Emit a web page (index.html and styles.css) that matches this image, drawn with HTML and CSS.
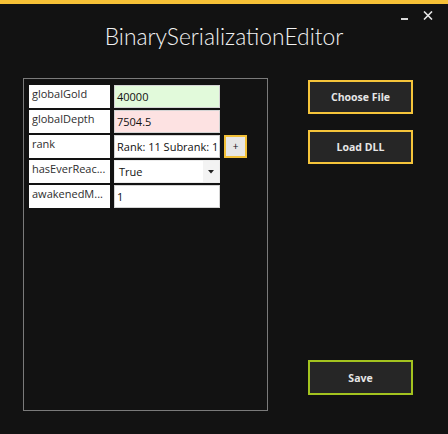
FILE: index.html
```html
<!DOCTYPE html>
<html>
<head>
<meta charset="utf-8">
<link rel="stylesheet" href="styles.css">
</head>
<body>
<div class="window">
  <div class="accent"></div>
  <div class="controls">
    <span class="min"></span>
    <svg class="close" width="10" height="9" viewBox="0 0 10 9"><path d="M1 0.5 L9 8.5 M9 0.5 L1 8.5" stroke="#e6e6e6" stroke-width="1.6" fill="none"/></svg>
  </div>
  <h1 class="title">BinarySerializationEditor</h1>
  <div class="main">
    <div class="panel">
      <div class="row">
        <div class="label">globalGold</div>
        <div class="field ok">40000</div>
      </div>
      <div class="row">
        <div class="label">globalDepth</div>
        <div class="field bad">7504.5</div>
      </div>
      <div class="row">
        <div class="label">rank</div>
        <div class="field">Rank: 11 Subrank: 1</div>
        <div class="plus">+</div>
      </div>
      <div class="row">
        <div class="label">hasEverReac...</div>
        <div class="field combo"><span class="combo-text">True</span><span class="arrow"><svg width="6" height="4" viewBox="0 0 6 4"><path d="M0 0 H6 L3 3.5 Z" fill="#222"/></svg></span></div>
      </div>
      <div class="row">
        <div class="label">awakenedM...</div>
        <div class="field">1</div>
      </div>
    </div>
    <div class="actions">
      <div class="btn first">Choose File</div>
      <div class="btn second">Load DLL</div>
      <div class="btn save">Save</div>
    </div>
  </div>
</div>
</body>
</html>
```

FILE: styles.css
```css
html, body {
  margin: 0;
  padding: 0;
  background: #121212;
}
.window {
  width: 448px;
  height: 434px;
  background: #121212;
  font-family: "Open Sans", "Liberation Sans", sans-serif;
  overflow: hidden;
}
.accent {
  height: 4px;
  background: #f6c136;
}
.controls {
  height: 17px;
  display: flex;
  justify-content: flex-end;
  align-items: flex-start;
  padding-right: 15px;
  box-sizing: border-box;
  padding-top: 7px;
}
.min {
  width: 7px;
  height: 2px;
  background: #d8d8d8;
  margin-top: 7px;
  margin-right: 15px;
}
.close {
  display: block;
}
.title {
  margin: 0;
  text-align: center;
  font-family: "Lato", "Open Sans", sans-serif;
  font-size: 22.8px;
  line-height: 30px;
  font-weight: 300;
  color: #f2f2f2;
}
.main {
  display: flex;
  margin-top: 27px;
  padding-left: 23px;
}
.panel {
  width: 245px;
  height: 333px;
  box-sizing: border-box;
  border: 1px solid #7a7a7a;
  padding: 6px 0 0 5px;
}
.row {
  display: flex;
  gap: 4px;
  height: 23px;
  margin-bottom: 2px;
}
.label {
  width: 81px;
  height: 23px;
  box-sizing: border-box;
  background: #ffffff;
  color: #2e2e2e;
  font-size: 11px;
  line-height: 14px;
  padding: 2px 2px 0 3px;
  white-space: nowrap;
  overflow: hidden;
}
.field {
  width: 106px;
  height: 23px;
  box-sizing: border-box;
  background: #ffffff;
  border: 1px solid #d4d4d4;
  color: #111111;
  font-size: 11px;
  line-height: 21px;
  padding-left: 2px;
  white-space: nowrap;
  overflow: hidden;
}
.field.ok {
  background: #e2fadb;
}
.field.bad {
  background: #fde2e2;
}
.combo {
  display: flex;
  justify-content: space-between;
  padding-right: 0;
  border-color: #ececec;
}
.combo-text {
  padding-left: 2px;
}
.arrow {
  width: 16px;
  background: #f3f3f3;
  display: flex;
  align-items: center;
  justify-content: center;
}
.arrow svg {
  display: block;
}
.plus {
  width: 23px;
  height: 23px;
  box-sizing: border-box;
  border: 2px solid #f2c038;
  background: #e6e6e6;
  color: #111;
  font-size: 10px;
  line-height: 19px;
  text-align: center;
}
.actions {
  width: 105px;
  margin-left: 40px;
  display: flex;
  flex-direction: column;
}
.btn {
  box-sizing: border-box;
  height: 34px;
  border: 2px solid #f5c43a;
  background: #262626;
  color: #e6e6e6;
  font-size: 10.5px;
  font-weight: 700;
  display: flex;
  align-items: center;
  justify-content: center;
}
.btn.first {
  margin-top: 2px;
}
.btn.second {
  margin-top: 16px;
}
.btn.save {
  margin-top: auto;
  margin-bottom: 16px;
  height: 35px;
  border-color: #a3c31f;
}
```
